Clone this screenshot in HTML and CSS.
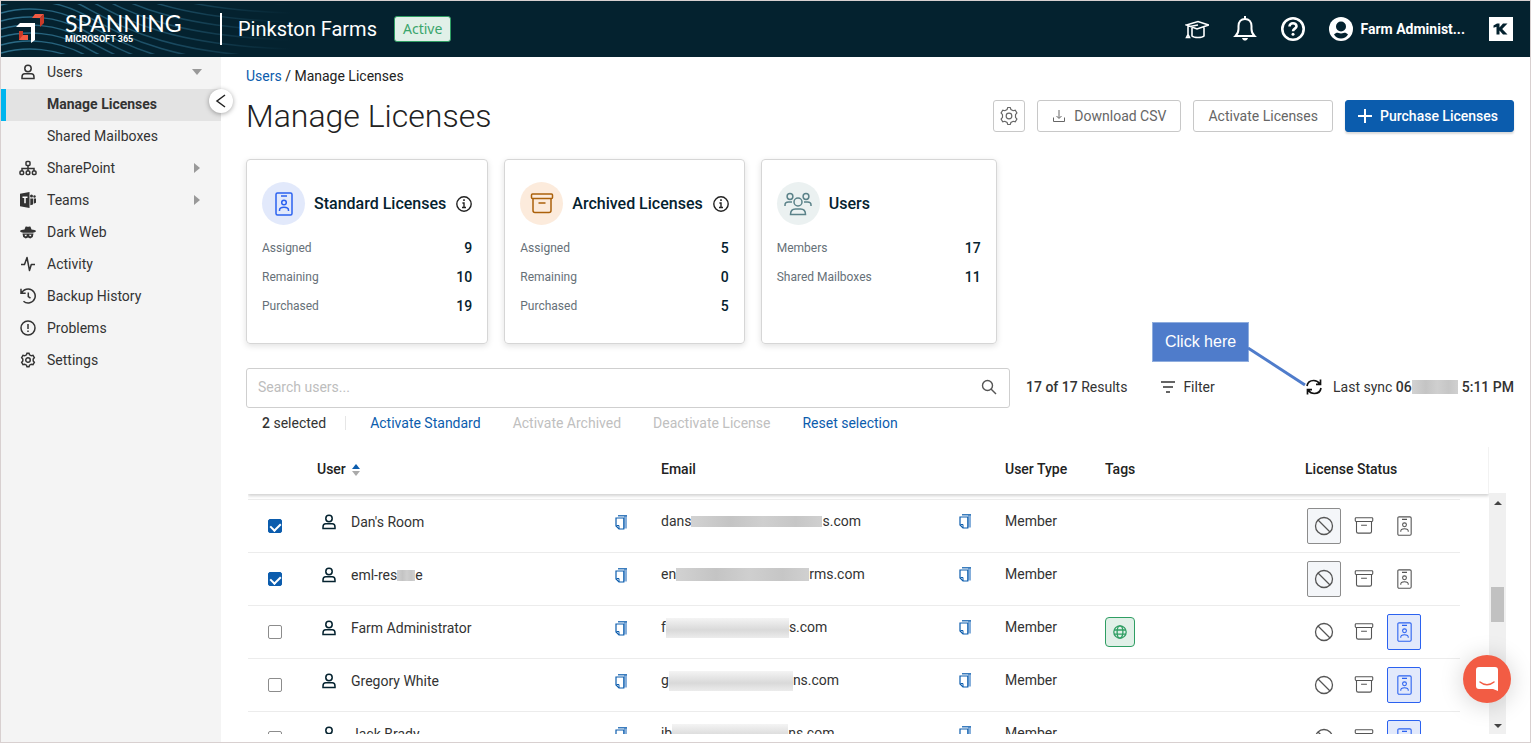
FILE: index.html
```html
<!DOCTYPE html>
<html lang="en">
<head>
    <meta charset="UTF-8">
    <meta name="viewport" content="width=device-width, initial-scale=1.0">
    <title>Manage Licenses</title>
    <link rel="stylesheet" href="styles.css">
</head>
<body>
<!-- shared icons -->
<svg class="sprite" aria-hidden="true">
    <symbol id="i-user" viewBox="0 0 14 16">
        <circle cx="7" cy="4.500" r="3.200"/>
        <path d="M3.800 9.800h6.400c1.600 0 2.800 1.400 2.800 3.200v1.400H1V13c0-1.800 1.200-3.200 2.800-3.200z"/>
    </symbol>
    <symbol id="i-copy" viewBox="0 0 13 15">
        <path d="M9 1h3v12.500H9z" fill="#86afdb" stroke="none"/>
        <path d="M3 .8h9" stroke-width="1.200"/>
        <path d="M1 3h7.800v11H4l-3-3z" fill="#fff" stroke-width="1.200"/>
        <path d="M1.500 10.500H4V14" stroke-width="1"/>
    </symbol>
    <symbol id="i-ban" viewBox="0 0 20 20">
        <circle cx="10" cy="10" r="8.500"/>
        <path d="M4 4l12 12"/>
    </symbol>
    <symbol id="i-box" viewBox="0 0 24 24">
        <rect x="1.500" y="2" width="21" height="4.500" rx="1"/>
        <path d="M3 6.500v12a2 2 0 0 0 2 2h14a2 2 0 0 0 2-2v-12M8.500 11h7"/>
    </symbol>
    <symbol id="i-badge" viewBox="0 0 18 24">
        <rect x="1" y="1" width="16" height="22" rx="1.500"/>
        <path d="M6 4h6M4.500 19v-.8c0-2 1.600-3 4.500-3s4.500 1 4.500 3v.8"/>
        <circle cx="9" cy="10.500" r="2.300"/>
    </symbol>
    <symbol id="i-gear" viewBox="0 0 24 24">
        <circle cx="12" cy="12" r="3.400"/>
        <path d="M9.700 4.200 10.500 1.800h3l.8 2.400 2.700 1.500 2.500-.6 2 3.300-1.700 2v3.200l1.700 2-2 3.300-2.500-.6-2.700 1.500-.8 2.400h-3l-.8-2.400L7 18.300l-2.500.6-2-3.300 1.700-2v-3.200l-1.700-2 2-3.300 2.500.6z"/>
    </symbol>
    <symbol id="i-info" viewBox="0 0 16 16">
        <circle cx="8" cy="8" r="7.200"/>
        <path d="M6.400 7H8v4.300M6 11.500h4" />
        <path d="M7.200 4.200h1.600" stroke-width="1.800"/>
    </symbol>
</svg>

<header class="topbar">
    <svg class="waves" width="290" height="56" viewBox="0 0 290 56" aria-hidden="true">
        <defs>
            <linearGradient id="fade" gradientUnits="userSpaceOnUse" x1="0" y1="0" x2="290" y2="0">
                <stop offset="0" stop-color="#2b6c88"/>
                <stop offset=".55" stop-color="#1c4e65"/>
                <stop offset="1" stop-color="#04222f"/>
            </linearGradient>
            <clipPath id="band"><path d="M0 3h290v50H0z"/></clipPath>
            <path id="wave" d="M0 0C25 -7 55 -5 82 9C125 32 165 57 290 61"/>
        </defs>
        <g clip-path="url(#band)" fill="none" stroke="url(#fade)" stroke-width="1.500">
            <use href="#wave" y="-58"/><use href="#wave" y="-49"/><use href="#wave" y="-40"/>
            <use href="#wave" y="-31"/><use href="#wave" y="-22"/><use href="#wave" y="-13"/>
            <use href="#wave" y="-4"/><use href="#wave" y="4"/><use href="#wave" y="12"/>
            <use href="#wave" y="20"/><use href="#wave" y="28"/><use href="#wave" y="36"/>
            <use href="#wave" y="44"/><use href="#wave" y="52"/><use href="#wave" y="59"/>
        </g>
    </svg>
    <a class="brand" href="#">
        <svg width="30" height="30" viewBox="0 0 30 30" aria-hidden="true">
            <path d="M20 0h9l-4 4h-8z" fill="#f05a42"/>
            <path d="M29 0v9l-4 4V4z" fill="#c93a28"/>
            <path d="M5 9h15v17l-4 3V13H1z" fill="#fff"/>
            <path d="M4 17h4v4h5v5H4z" fill="#f05a42"/>
            <path d="M4 26l4-5V17H4z" fill="#c93a28"/>
        </svg>
        <span class="brand-text">
            <span class="brand-name">SPANNING</span>
            <span class="brand-sub">MICROSOFT 365</span>
        </span>
    </a>
    <span class="org">Pinkston Farms</span>
    <span class="status">Active</span>
    <div class="top-actions">
        <button class="icon-btn" aria-label="Training">
            <svg width="24" height="24" viewBox="0 0 24 24" fill="none" stroke="#fff" stroke-width="1.600">
                <path d="M1.500 8 13 4.500 23.500 8 12 12zM3 9v10M1.500 20.500l1.500-3 1.500 3zM7 11v8c2 2 10 2 12 0v-8.500M5 9.500l8-1.500"/>
            </svg>
        </button>
        <button class="icon-btn" aria-label="Notifications">
            <svg width="24" height="26" viewBox="0 0 24 26" fill="none" stroke="#fff" stroke-width="2">
                <path d="M12 0v3M2.500 20h19c-2-2-3-4-3-7v-3c0-4-2.500-7-6.500-7s-6.500 3-6.500 7v3c0 3-1 5-3 7z"/>
                <path d="M9.500 22.500h5l-1.200 1.500h-2.600z" fill="#fff" stroke-width="1"/>
            </svg>
        </button>
        <button class="icon-btn" aria-label="Help">
            <svg width="24" height="24" viewBox="0 0 24 24" fill="none" stroke="#fff" stroke-width="2.600">
                <circle cx="12" cy="12" r="10.700"/>
                <path d="M8.500 9.500c0-2 1.500-3.300 3.500-3.300s3.500 1.300 3.500 3c0 2.300-3.500 2.500-3.500 5"/>
                <circle cx="12" cy="17.300" r="1.500" fill="#fff" stroke="none"/>
            </svg>
        </button>
        <button class="account">
            <svg width="24" height="24" viewBox="0 0 24 24" aria-hidden="true">
                <circle cx="12" cy="12" r="12" fill="#fff"/>
                <circle cx="12" cy="9.500" r="5" fill="#04222f"/>
                <path d="M5 17.500c1.500-1.500 3-2 4.500-1.500 1.600.6 3.400.6 5 0 1.500-.5 3 0 4.500 1.500-1.500 2.500-4 4-7 4s-5.500-1.500-7-4z" fill="#04222f"/>
            </svg>
            Farm Administ...
        </button>
        <button class="icon-btn" aria-label="Apps">
            <svg width="24" height="24" viewBox="0 0 24 24">
                <path d="M0 0h24v24H0z" fill="#fff"/>
                <path d="M4.500 8.500 8 6.500h2.500v4L14 6.500h4.500L13.200 12l5.300 5.500H14l-3.500-4v4h-3V9.700l-3 1z" fill="#04222f"/>
            </svg>
        </button>
    </div>
</header>

<div class="layout">
    <nav class="sidebar">
        <a class="nav-item" href="#">
            <svg class="line" width="14" height="16"><use href="#i-user"/></svg>
            Users
            <span class="caret-down"></span>
        </a>
        <a class="nav-item sub active" href="#">Manage Licenses</a>
        <a class="nav-item sub" href="#">Shared Mailboxes</a>
        <a class="nav-item" href="#">
            <svg class="line" width="18" height="16" viewBox="0 0 18 16">
                <rect x="7" y="1.500" width="4" height="4" rx="1"/>
                <path d="M9 5.500V11M3 11V8.500h12V11"/>
                <rect x="1" y="11" width="3.600" height="3.600" rx="1"/><rect x="7.200" y="11" width="3.600" height="3.600" rx="1"/><rect x="13.400" y="11" width="3.600" height="3.600" rx="1"/>
            </svg>
            SharePoint
            <span class="caret-right"></span>
        </a>
        <a class="nav-item" href="#">
            <svg width="16" height="16" viewBox="0 0 16 16">
                <path d="M0 1.800 9.500 0v16L0 14.200z" fill="#333"/>
                <path d="M2.500 5.200h5M5 5.200v6" stroke="#fff" stroke-width="1.500"/>
                <circle cx="11.500" cy="4" r="1.500" fill="#333"/><circle cx="14.500" cy="4.500" r="1.200" fill="#333"/>
                <path d="M10.300 6.500H13v6l-2.700.8zM13.700 6.500H16v4.300l-2.300.9z" fill="#333"/>
            </svg>
            Teams
            <span class="caret-right"></span>
        </a>
        <a class="nav-item" href="#">
            <svg width="16" height="14" viewBox="0 0 16 14" fill="#333">
                <path d="M4.500 4.500 5.500 1.800c.8-.6 1.700 0 2.500 0s1.700-.6 2.500 0l1 2.700c2 .3 4.500.6 4.500 1.500 0 1-2.500 1.700-3 1.800H3C2.500 7.700 0 7 0 6c0-.9 2.500-1.200 4.500-1.500z"/>
                <path d="M2.500 8.500h11l-.7 3.500-2.500 1.500-2.300-1-2.300 1L3.200 12z"/>
                <path d="M4.500 9.800h2.500l-.8 1.400H5.200zM9 9.800h2.500l-.7 1.400H9.800z" fill="#f4f4f4"/>
            </svg>
            Dark Web
        </a>
        <a class="nav-item" href="#">
            <svg class="line" width="14" height="16" viewBox="0 0 14 16" stroke-linejoin="round"><path d="M0 8.500h3.500L6 1.500l2.500 13 1.800-6H14"/></svg>
            Activity
        </a>
        <a class="nav-item" href="#">
            <svg class="line" width="16" height="16" viewBox="0 0 16 16">
                <path d="M1 .8v4.500h4.700M1.500 5C3 2.500 5.500 1 8.300 1a7 7 0 1 1-4.800 12.200M8.300 4.500v4.200l2.200 1.500"/>
            </svg>
            Backup History
        </a>
        <a class="nav-item" href="#">
            <svg class="line" width="16" height="16" viewBox="0 0 16 16">
                <circle cx="8" cy="8" r="7"/><path d="M8 4v5M8 10.500V12"/>
            </svg>
            Problems
        </a>
        <a class="nav-item" href="#">
            <svg class="line thick" width="16" height="16"><use href="#i-gear"/></svg>
            Settings
        </a>
        <button class="collapse" aria-label="Collapse menu">
            <svg width="12" height="14" viewBox="0 0 12 14" fill="none" stroke="#222" stroke-width="1.500"><path d="M10 1 2 7l8 6"/></svg>
        </button>
    </nav>

    <main class="content">
        <div class="breadcrumb"><a href="#">Users</a> / Manage Licenses</div>
        <div class="title-row">
            <h1>Manage Licenses</h1>
            <div class="buttons">
                <button class="btn btn-square" aria-label="Table settings">
                    <svg width="20" height="20" fill="none" stroke="#666" stroke-width="1.400"><use href="#i-gear"/></svg>
                </button>
                <button class="btn">
                    <svg width="14" height="14" viewBox="0 0 14 14" fill="none" stroke="#666"><path d="M1.500 8.500v4h11v-4M7 1v8M4.500 7 7 9.500 9.500 7"/></svg>
                    Download CSV
                </button>
                <button class="btn">Activate Licenses</button>
                <button class="btn btn-primary">
                    <svg width="14" height="14" viewBox="0 0 14 14" stroke="#fff" stroke-width="2"><path d="M7 0v14M0 7h14"/></svg>
                    Purchase Licenses
                </button>
            </div>
        </div>

        <div class="cards">
            <section class="card">
                <div class="card-head">
                    <span class="round blue"><svg width="18" height="24"><use href="#i-badge"/></svg></span>
                    <h2>Standard Licenses</h2>
                    <svg class="info" width="16" height="16"><use href="#i-info"/></svg>
                </div>
                <div class="stat"><span>Assigned</span><b>9</b></div>
                <div class="stat"><span>Remaining</span><b>10</b></div>
                <div class="stat"><span>Purchased</span><b>19</b></div>
            </section>
            <section class="card">
                <div class="card-head">
                    <span class="round orange"><svg width="24" height="24"><use href="#i-box"/></svg></span>
                    <h2>Archived Licenses</h2>
                    <svg class="info" width="16" height="16"><use href="#i-info"/></svg>
                </div>
                <div class="stat"><span>Assigned</span><b>5</b></div>
                <div class="stat"><span>Remaining</span><b>0</b></div>
                <div class="stat"><span>Purchased</span><b>5</b></div>
            </section>
            <section class="card">
                <div class="card-head">
                    <span class="round teal">
                        <svg width="28" height="24" viewBox="0 0 28 24">
                            <circle cx="6" cy="4.500" r="2.900"/><circle cx="22" cy="4.500" r="2.900"/><circle cx="14" cy="10" r="4"/>
                            <path d="M1 14v-1c0-2 1.500-3 3.500-3H8M27 14v-1c0-2-1.500-3-3.500-3H20M6.500 22.500c0-4 2-5.500 5-5.500h5c3 0 5 1.500 5 5.500z"/>
                        </svg>
                    </span>
                    <h2>Users</h2>
                </div>
                <div class="stat"><span>Members</span><b>17</b></div>
                <div class="stat"><span>Shared Mailboxes</span><b>11</b></div>
            </section>
        </div>

        <div class="toolbar">
            <div class="search">
                <input type="text" placeholder="Search users..." aria-label="Search users">
                <svg width="16" height="16" viewBox="0 0 16 16" fill="none" stroke="#555" stroke-width="1.400"><circle cx="6.500" cy="6.500" r="5"/><path d="M10 10l5 5"/></svg>
            </div>
            <div class="toolbar-side">
                <span class="results"><b>17 of 17</b> Results</span>
                <button class="filter">
                    <svg width="14" height="12" viewBox="0 0 14 12" stroke="#333" stroke-width="1.500"><path d="M0 1h14M2 6h10M5 11h4"/></svg>
                    Filter
                </button>
                <div class="sync">
                    <button class="icon-btn" aria-label="Sync now">
                        <svg width="16" height="16" viewBox="0 0 16 16" fill="none" stroke="#111" stroke-width="1.700">
                            <path d="M1 7c.5-3.200 3.200-5.500 6.700-5.500 2.500 0 4.700 1.200 6 3.200M14.500.5v4.800H10M15 9c-.5 3.200-3.200 5.500-6.700 5.500-2.500 0-4.700-1.200-6-3.200M1.500 15.500v-4.800H6"/>
                        </svg>
                    </button>
                    <span>Last sync <b>06<span class="redacted r-date"></span>5:11 PM</b></span>
                    <div class="callout">Click here
                        <svg width="58" height="40" viewBox="0 0 58 40"><path d="M0 1l57 37" stroke="#4f7ccb" stroke-width="3"/></svg>
                    </div>
                </div>
            </div>
        </div>

        <div class="selection">
            <span class="count"><b>2</b> selected</span>
            <button>Activate Standard</button>
            <button disabled>Activate Archived</button>
            <button disabled>Deactivate License</button>
            <button>Reset selection</button>
        </div>

        <div class="table-wrap">
            <div class="table-view">
                <table>
                    <thead>
                        <tr>
                            <th class="c-check"></th>
                            <th>User <svg width="8" height="12" viewBox="0 0 8 12"><path d="M0 5l4-5 4 5z" fill="#0b5cad"/><path d="M0 7h8l-4 5z" fill="#aaa"/></svg></th>
                            <th>Email</th>
                            <th class="c-type">User Type</th>
                            <th class="c-tags">Tags</th>
                            <th class="c-status">License Status</th>
                            <th class="c-end"></th>
                        </tr>
                    </thead>
                    <tbody>
                        <tr>
                            <td class="check"><input type="checkbox" aria-label="Select Dan's Room" checked></td>
                            <td><div class="cell"><svg class="person" width="14" height="16"><use href="#i-user"/></svg><span>Dan's Room</span><button class="copy" aria-label="Copy name"><svg width="13" height="15"><use href="#i-copy"/></svg></button></div></td>
                            <td><div class="cell mail"><span>dans<span class="redacted r-1"></span>s.com</span><button class="copy" aria-label="Copy email"><svg width="13" height="15"><use href="#i-copy"/></svg></button></div></td>
                            <td class="type">Member</td>
                            <td></td>
                            <td><div class="licenses">
                                <button class="none on" aria-label="No license"><svg width="20" height="20"><use href="#i-ban"/></svg></button>
                                <button aria-label="Archived"><svg width="20" height="20"><use href="#i-box"/></svg></button>
                                <button aria-label="Standard"><svg width="15" height="20"><use href="#i-badge"/></svg></button>
                            </div></td>
                            <td class="end"></td>
                        </tr>
                        <tr>
                            <td class="check"><input type="checkbox" aria-label="Select eml-restore" checked></td>
                            <td><div class="cell"><svg class="person" width="14" height="16"><use href="#i-user"/></svg><span>eml-res<span class="redacted r-name"></span>e</span><button class="copy" aria-label="Copy name"><svg width="13" height="15"><use href="#i-copy"/></svg></button></div></td>
                            <td><div class="cell mail"><span>en<span class="redacted r-2"></span>rms.com</span><button class="copy" aria-label="Copy email"><svg width="13" height="15"><use href="#i-copy"/></svg></button></div></td>
                            <td class="type">Member</td>
                            <td></td>
                            <td><div class="licenses">
                                <button class="none on" aria-label="No license"><svg width="20" height="20"><use href="#i-ban"/></svg></button>
                                <button aria-label="Archived"><svg width="20" height="20"><use href="#i-box"/></svg></button>
                                <button aria-label="Standard"><svg width="15" height="20"><use href="#i-badge"/></svg></button>
                            </div></td>
                            <td class="end"></td>
                        </tr>
                        <tr>
                            <td class="check"><input type="checkbox" aria-label="Select Farm Administrator"></td>
                            <td><div class="cell"><svg class="person" width="14" height="16"><use href="#i-user"/></svg><span>Farm Administrator</span><button class="copy" aria-label="Copy name"><svg width="13" height="15"><use href="#i-copy"/></svg></button></div></td>
                            <td><div class="cell mail"><span>f<span class="redacted light r-3"></span>s.com</span><button class="copy" aria-label="Copy email"><svg width="13" height="15"><use href="#i-copy"/></svg></button></div></td>
                            <td class="type">Member</td>
                            <td><span class="tag"><svg width="14" height="14" viewBox="0 0 14 14" fill="none" stroke="#2f9e63" stroke-width="1.300"><circle cx="7" cy="7" r="6.200"/><ellipse cx="7" cy="7" rx="2.900" ry="6.200"/><path d="M1 5h12M1 9.200h12"/></svg></span></td>
                            <td><div class="licenses">
                                <button aria-label="No license"><svg width="20" height="20"><use href="#i-ban"/></svg></button>
                                <button aria-label="Archived"><svg width="20" height="20"><use href="#i-box"/></svg></button>
                                <button class="standard on" aria-label="Standard"><svg width="15" height="20"><use href="#i-badge"/></svg></button>
                            </div></td>
                            <td class="end"></td>
                        </tr>
                        <tr>
                            <td class="check"><input type="checkbox" aria-label="Select Gregory White"></td>
                            <td><div class="cell"><svg class="person" width="14" height="16"><use href="#i-user"/></svg><span>Gregory White</span><button class="copy" aria-label="Copy name"><svg width="13" height="15"><use href="#i-copy"/></svg></button></div></td>
                            <td><div class="cell mail"><span>g<span class="redacted light r-4"></span>ns.com</span><button class="copy" aria-label="Copy email"><svg width="13" height="15"><use href="#i-copy"/></svg></button></div></td>
                            <td class="type">Member</td>
                            <td></td>
                            <td><div class="licenses">
                                <button aria-label="No license"><svg width="20" height="20"><use href="#i-ban"/></svg></button>
                                <button aria-label="Archived"><svg width="20" height="20"><use href="#i-box"/></svg></button>
                                <button class="standard on" aria-label="Standard"><svg width="15" height="20"><use href="#i-badge"/></svg></button>
                            </div></td>
                            <td class="end"></td>
                        </tr>
                        <tr>
                            <td class="check"><input type="checkbox" aria-label="Select Jack Brady"></td>
                            <td><div class="cell"><svg class="person" width="14" height="16"><use href="#i-user"/></svg><span>Jack Brady</span><button class="copy" aria-label="Copy name"><svg width="13" height="15"><use href="#i-copy"/></svg></button></div></td>
                            <td><div class="cell mail"><span>jb<span class="redacted light r-5"></span>ns.com</span><button class="copy" aria-label="Copy email"><svg width="13" height="15"><use href="#i-copy"/></svg></button></div></td>
                            <td class="type">Member</td>
                            <td></td>
                            <td><div class="licenses">
                                <button aria-label="No license"><svg width="20" height="20"><use href="#i-ban"/></svg></button>
                                <button aria-label="Archived"><svg width="20" height="20"><use href="#i-box"/></svg></button>
                                <button class="standard on" aria-label="Standard"><svg width="15" height="20"><use href="#i-badge"/></svg></button>
                            </div></td>
                            <td class="end"></td>
                        </tr>
                    </tbody>
                </table>
            </div>
            <div class="scrollbar">
                <span class="arrow-up"></span>
                <span class="thumb"></span>
                <span class="arrow-down"></span>
            </div>
        </div>
    </main>
</div>

<button class="chat" aria-label="Open chat">
    <svg width="22" height="24" viewBox="0 0 22 24">
        <path d="M3 0h16a3 3 0 0 1 3 3v21l-5-2H3a3 3 0 0 1-3-3V3a3 3 0 0 1 3-3z" fill="#fff"/>
        <path d="M4 15c4 3.500 10 3.500 14 0" fill="none" stroke="#f25c44" stroke-width="1.500" stroke-linecap="round"/>
    </svg>
</button>
</body>
</html>
```
FILE: styles.css
```css
* {
    box-sizing: border-box;
}
body {
    margin: 0;
    height: 100vh;
    display: flex;
    flex-direction: column;
    border: 1px solid #d8d0d0;
    font-family: Roboto, sans-serif;
    font-size: 14px;
    line-height: 20px;
    color: #333;
    background-color: #fff;
    overflow: hidden;
}
button {
    font: inherit;
    color: inherit;
    background: none;
    border: none;
    padding: 0;
    cursor: pointer;
}
a {
    text-decoration: none;
}
b {
    font-weight: 500;
}
.sprite {
    display: none;
}

/* top bar */
.topbar {
    position: relative;
    flex: none;
    display: flex;
    align-items: center;
    height: 56px;
    padding-right: 17px;
    background-color: #04222f;
    color: #fff;
}
.waves {
    position: absolute;
    left: 0;
    top: 0;
}
.brand {
    position: relative;
    display: flex;
    align-items: center;
    gap: 20px;
    width: 221px;
    height: 32px;
    padding-left: 14px;
    border-right: 2px solid #fff;
    color: #fff;
}
.brand-text {
    display: flex;
    flex-direction: column;
}
.brand-name {
    font-family: Lato, sans-serif;
    font-size: 23px;
    line-height: 20px;
}
.brand-sub {
    font-size: 9px;
    font-weight: 700;
    line-height: 12px;
}
.org {
    position: relative;
    margin-left: 16px;
    font-size: 20px;
}
.status {
    margin-left: 17px;
    padding: 2px 8px;
    border: 1px solid #2f9e63;
    border-radius: 3px;
    background-color: #e1f0e8;
    color: #3aa56c;
    font-family: "Noto Sans", sans-serif;
}
.top-actions {
    display: flex;
    align-items: center;
    gap: 24px;
    margin-left: auto;
}
.icon-btn {
    display: flex;
}
.account {
    display: flex;
    align-items: center;
    gap: 8px;
    font-weight: 700;
}

/* side menu */
.layout {
    flex: 1;
    display: flex;
    min-height: 0;
}
.sidebar {
    position: relative;
    flex: none;
    width: 220px;
    background-color: #f4f4f4;
}
.nav-item {
    display: flex;
    align-items: center;
    height: 32px;
    padding-left: 46px;
    padding-right: 19px;
    padding-bottom: 2px;
    color: #333;
}
.nav-item svg {
    width: 18px;
    margin-left: -28px;
    margin-right: 10px;
}
.line {
    fill: none;
    stroke: #333;
    stroke-width: 1.5px;
}
.line.thick {
    stroke-width: 2.2px;
}
.nav-item.active {
    padding-left: 41px;
    border-left: 5px solid #00b5ee;
    background-color: #e3e3e3;
    font-weight: 700;
}
.caret-down, .caret-right {
    margin-left: auto;
    border: 5px solid transparent;
}
.caret-down {
    border-top: 6px solid #999;
    border-bottom: none;
}
.caret-right {
    border-left: 6px solid #999;
    border-right: none;
    margin-right: 2px;
}
.collapse {
    position: absolute;
    top: 32px;
    right: -12px;
    width: 24px;
    height: 24px;
    display: flex;
    align-items: center;
    justify-content: center;
    border-radius: 50%;
    background-color: #fff;
    box-shadow: 0 1px 5px rgba(0, 0, 0, 0.35);
}

/* page */
.content {
    flex: 1;
    min-width: 0;
    display: flex;
    flex-direction: column;
    padding: 9px 16px 8px 25px;
}
.breadcrumb a {
    color: #0b5cad;
}
.breadcrumb {
    color: #222;
}
.title-row {
    display: flex;
    justify-content: space-between;
    align-items: center;
    margin-top: 10px;
}
h1 {
    margin: 0;
    font-size: 32px;
    font-weight: 300;
    line-height: 40px;
    color: #222;
}
.buttons {
    display: flex;
    gap: 12px;
}
.btn {
    display: flex;
    align-items: center;
    gap: 8px;
    height: 32px;
    padding: 0 14px;
    border: 1px solid #c8c8c8;
    border-radius: 3px;
    color: #666;
}
.btn-square {
    padding: 0 5px;
}
.btn-primary {
    background-color: #0b5cad;
    border-color: #0b5cad;
    color: #fff;
    font-weight: 500;
    padding: 0 15px 0 12px;
    box-shadow: 0 2px 2px rgba(0, 0, 0, 0.15);
}

.cards {
    display: flex;
    gap: 16px;
    margin-top: 23px;
}
.card {
    min-width: 236px;
    height: 185px;
    padding: 22px 15px;
    border: 1px solid #d6d6d6;
    border-radius: 4px;
    box-shadow: 0 2px 6px rgba(0, 0, 0, 0.12);
}
.card-head {
    display: flex;
    align-items: center;
    gap: 9px;
    margin-bottom: 8px;
}
.card h2 {
    margin: 0 1px 0 0;
    font-size: 16px;
    font-weight: 500;
    color: #04222f;
}
.round {
    width: 43px;
    height: 43px;
    display: flex;
    align-items: center;
    justify-content: center;
    border-radius: 50%;
    fill: none;
    stroke-width: 1.5px;
}
.blue {
    background-color: #e2e9fb;
    stroke: #2b62f0;
}
.orange {
    background-color: #fcebdc;
    stroke: #ab610b;
}
.teal {
    background-color: #ebf1f1;
    stroke: #5b8289;
}
.info {
    fill: none;
    stroke: #222;
    stroke-width: 1.4px;
}
.stat {
    display: flex;
    justify-content: space-between;
    align-items: center;
    height: 29px;
}
.stat span {
    font-size: 12px;
    color: #667078;
}
.stat b {
    color: #04222f;
}

.toolbar {
    display: flex;
    align-items: center;
    margin-top: 24px;
}
.search {
    flex: 1;
    display: flex;
    align-items: center;
    height: 40px;
    padding: 0 12px 2px 11px;
    border: 1px solid #cfcfcf;
    border-radius: 3px;
}
.search input {
    flex: 1;
    padding: 0;
    border: none;
    outline: none;
    font: inherit;
}
.search input::placeholder {
    color: #bdbdbd;
}
.toolbar-side {
    display: flex;
    align-items: center;
    width: 504px;
    padding: 0 0 2px 16px;
}
.filter {
    display: flex;
    align-items: center;
    gap: 8px;
    margin-left: 34px;
}
.sync {
    position: relative;
    display: flex;
    align-items: center;
    gap: 11px;
    margin-left: auto;
}
.callout {
    position: absolute;
    right: 265px;
    bottom: 35px;
    width: 97px;
    padding: 9px 12px;
    border: 1px solid #8fadde;
    background-color: #4f7ccb;
    color: #fff;
    font-family: "Liberation Sans", Arial, sans-serif;
    font-size: 16px;
    white-space: nowrap;
}
.callout svg {
    position: absolute;
    left: 95px;
    top: 24px;
}

.selection {
    display: flex;
    align-items: center;
    height: 30px;
    padding-left: 16px;
    gap: 32px;
    color: #0b5cad;
}
.selection .count {
    padding-right: 19px;
    margin-right: -8px;
    border-right: 1px solid #e6e6e6;
    line-height: 14px;
    color: #333;
}
.selection button:disabled {
    color: #c0c0c0;
    cursor: default;
}

/* blurred out values */
.redacted {
    display: inline-block;
    height: 11px;
    vertical-align: -1px;
    background: linear-gradient(90deg, #d2d2d2, #c4c4c4 30%, #cfcfcf 55%, #c6c6c6 80%, #d0d0d0);
}
.redacted.light {
    height: 20px;
    vertical-align: middle;
    background: linear-gradient(#f4f4f4, #d9d9d9 60%, #ececec);
}
.r-date {
    width: 46px;
    height: 14px;
    margin-right: 4px;
    vertical-align: -2px;
}
.r-name {
    width: 18px;
}
.r-1 {
    width: 131px;
}
.r-2 {
    width: 133px;
    height: 13px;
    vertical-align: -2px;
}
.r-3 {
    width: 123px;
}
.r-4 {
    width: 124px;
}
.r-5 {
    width: 116px;
}

/* licenses table */
.table-wrap {
    flex: 1;
    display: flex;
    min-height: 0;
    margin: 9px 8px 0 2px;
}
.table-view {
    flex: 1;
    overflow: hidden;
}
table {
    width: 100%;
    table-layout: fixed;
    border-collapse: separate;
    border-spacing: 0;
}
thead {
    box-shadow: 0 2px 3px rgba(0, 0, 0, 0.18);
}
th {
    height: 47px;
    padding: 0 0 4px;
    text-align: left;
    font-weight: 500;
    color: #222;
}
th svg {
    margin-left: 3px;
    vertical-align: -2px;
}
.c-check {
    width: 69px;
}
.c-type {
    width: 100px;
}
.c-tags {
    width: 200px;
}
.c-status {
    width: 155px;
}
.c-end {
    width: 29px;
    border-right: 1px solid #f2f2f2;
}
tbody::before {
    content: "";
    display: block;
    height: 5px;
}
td {
    height: 53px;
    padding: 0;
    border-top: 1px solid #ececec;
    vertical-align: top;
}
td.end {
    border: none;
}
td.check {
    padding: 19px 0 0 20px;
}
.check input {
    appearance: none;
    display: block;
    width: 14px;
    height: 14px;
    margin: 0;
    border: 1px solid #8c8c8c;
    border-radius: 2px;
}
.check input:checked {
    background-color: #0b5cad;
    border-color: #0b5cad;
}
.check input:checked::after {
    content: "";
    display: block;
    width: 5px;
    height: 8px;
    margin: 1px auto;
    border: solid #fff;
    border-width: 0 2px 2px 0;
    transform: rotate(45deg);
}
.cell {
    display: flex;
    align-items: center;
    padding: 12px 33px 0 5px;
}
.cell.mail {
    padding: 11px 33px 0 0;
}
.cell.mail > span {
    height: 20px;
}
.person {
    margin-right: 15px;
    fill: none;
    stroke: #04222f;
    stroke-width: 1.5px;
}
.copy {
    display: flex;
    margin-left: auto;
    fill: none;
    stroke: #0b5cad;
}
td.type {
    padding-top: 11px;
}
.tag {
    display: flex;
    align-items: center;
    justify-content: center;
    width: 30px;
    height: 30px;
    margin-top: 11px;
    border: 1px solid #2f9e63;
    border-radius: 4px;
    background-color: #e1f0e8;
}
.licenses {
    display: flex;
    gap: 6px;
    padding: 8px 0 0 2px;
}
.licenses button {
    display: flex;
    align-items: center;
    justify-content: center;
    width: 34px;
    height: 36px;
    border: 1px solid transparent;
    border-radius: 2px;
    fill: none;
    stroke: #555;
    stroke-width: 1.3px;
}
.licenses .none.on {
    border-color: #8c8c8c;
    background-color: #f4f6f9;
}
.licenses .standard.on {
    border-color: #2b62f0;
    background-color: #e2e9fb;
    stroke: #2b62f0;
}
.scrollbar {
    display: flex;
    flex-direction: column;
    align-items: center;
    width: 17px;
    margin-top: 46px;
    padding: 8px 0 6px;
    background-color: #f0f0f0;
}
.arrow-up, .arrow-down {
    border: 4px solid transparent;
}
.arrow-up {
    border-bottom-color: #444;
    border-top: none;
}
.arrow-down {
    margin-top: auto;
    border-top-color: #444;
    border-bottom: none;
}
.thumb {
    width: 13px;
    height: 35px;
    margin-top: 82px;
    background-color: #c1c1c1;
}

.chat {
    position: fixed;
    right: 20px;
    bottom: 40px;
    display: flex;
    align-items: center;
    justify-content: center;
    width: 48px;
    height: 48px;
    border-radius: 50%;
    background-color: #f25c44;
    box-shadow: 0 2px 24px rgba(0, 0, 0, 0.18);
}
```
